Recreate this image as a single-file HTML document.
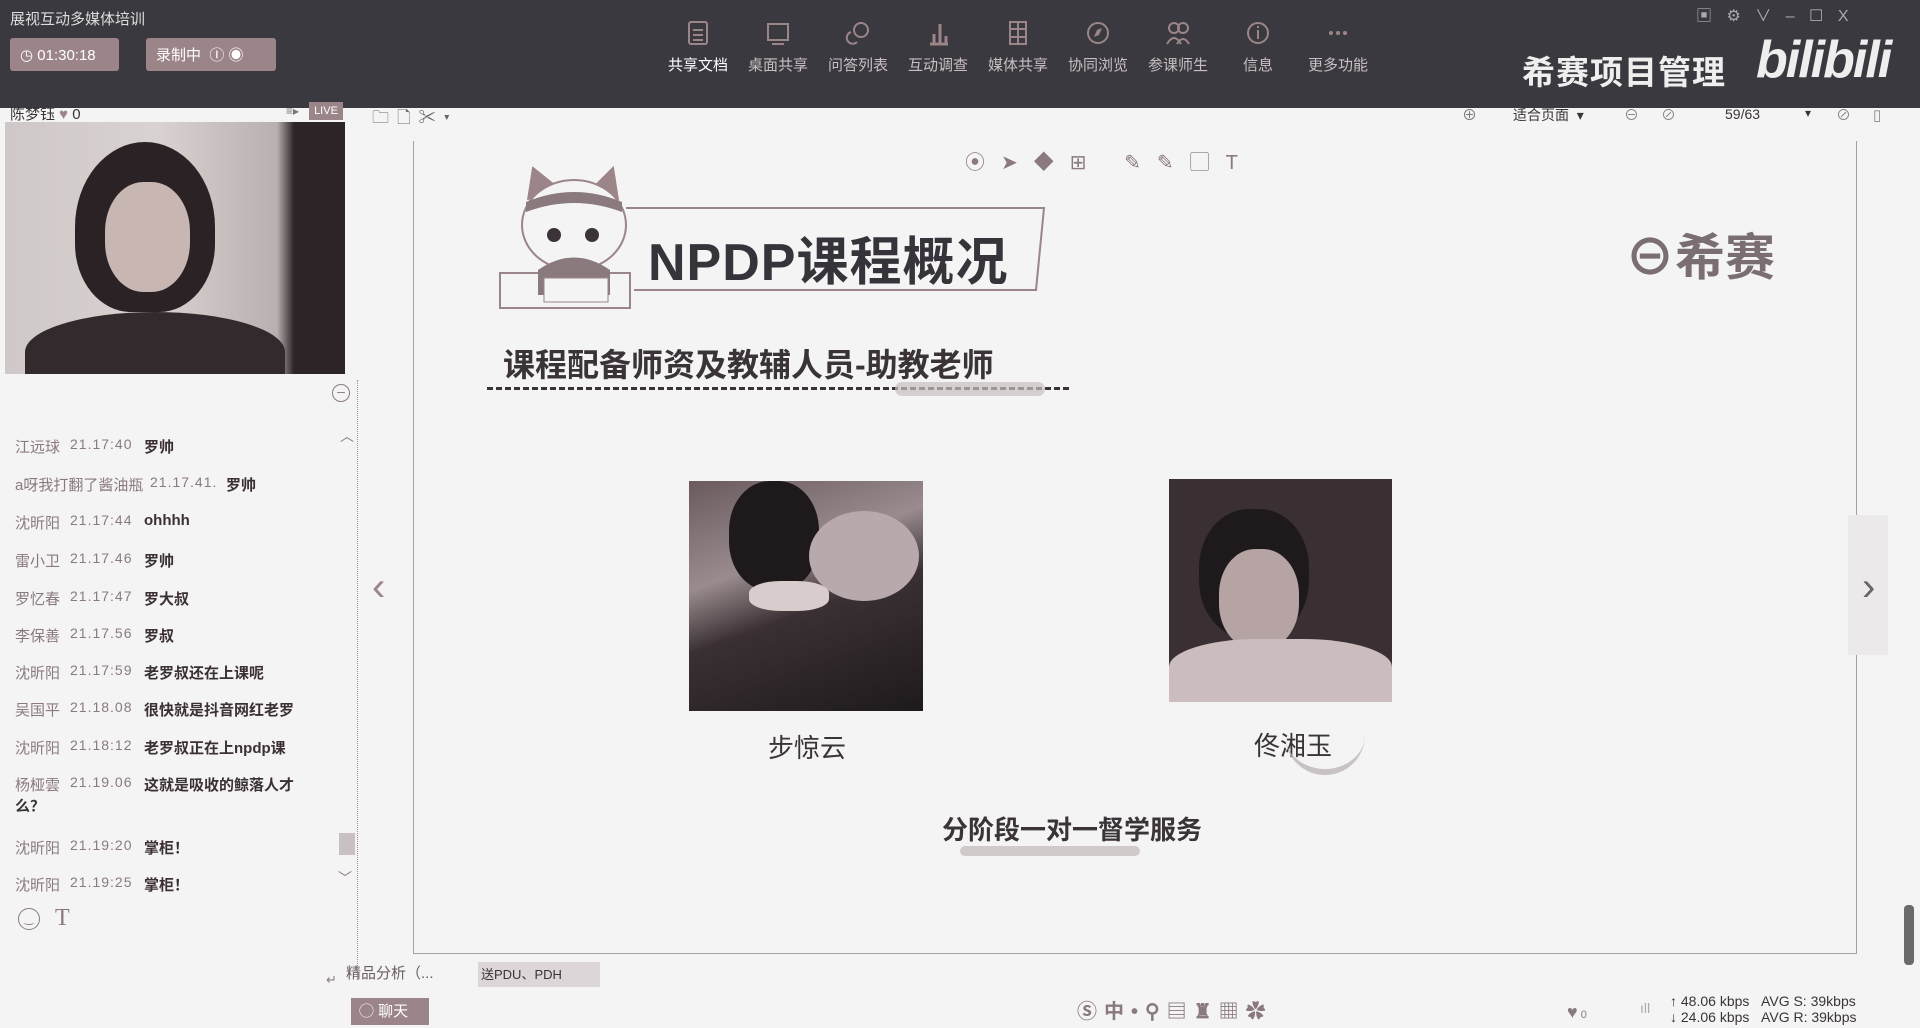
<!DOCTYPE html>
<html><head><meta charset="utf-8"><style>
*{margin:0;padding:0;box-sizing:border-box}
body{width:1920px;height:1028px;overflow:hidden;background:#f4f4f4;font-family:"Liberation Sans","Noto Sans CJK SC",sans-serif;position:relative;color:#3a3438}
.a{position:absolute}
.top{left:0;top:0;width:1920px;height:108px;background:#3b3940}
.btn{background:#9b8588;color:#fff;border-radius:3px;font-size:15px;display:flex;align-items:center;gap:8px;padding-left:10px}
.tb{color:#c9bfc2;font-size:15px;text-align:center;width:80px}
.tb svg{display:block;margin:0 auto 8px}
.chat{font-size:15px}
.chat .n{color:#8a7a7e;position:absolute;left:15px}
.chat .t{color:#8a7a7e;position:absolute;left:70px;font-size:14px;letter-spacing:1px}
.chat .m{position:absolute;left:144px;font-weight:bold;color:#3a3036}
</style></head><body>
<div class="a top"></div>
<div class="a" style="left:10px;top:8px;color:#ddd;font-size:15px">展视互动多媒体培训</div>
<div class="a btn" style="left:10px;top:38px;width:109px;height:33px">◷ 01:30:18</div>
<div class="a btn" style="left:146px;top:38px;width:130px;height:33px">录制中 &nbsp;Ⓘ ◉</div>
<div class="a" style="left:1696px;top:2px;color:#aaa;font-size:16px;white-space:nowrap;word-spacing:10px">▣ ⚙ ∨ – ☐ X</div>
<div class="a" style="left:658px;top:20px;display:flex">
<div class="tb" style="color:#fff"><svg width="22" height="26"><rect x="2" y="2" width="18" height="22" rx="2" fill="none" stroke="#9b8588" stroke-width="2"/><path d="M6 10h10M6 15h10M6 20h10" stroke="#9b8588" stroke-width="2"/></svg>共享文档</div>
<div class="tb"><svg width="24" height="26"><rect x="2" y="4" width="20" height="16" fill="none" stroke="#9b8588" stroke-width="2"/><path d="M6 24h12" stroke="#9b8588" stroke-width="2"/></svg>桌面共享</div>
<div class="tb"><svg width="26" height="26"><circle cx="16" cy="10" r="7" fill="none" stroke="#9b8588" stroke-width="2"/><path d="M6 12a6 6 0 1 0 6 10" fill="none" stroke="#9b8588" stroke-width="2"/></svg>问答列表</div>
<div class="tb"><svg width="24" height="26"><path d="M4 24h18M8 24V14M14 24V4M20 24V16" stroke="#9b8588" stroke-width="3"/></svg>互动调查</div>
<div class="tb"><svg width="24" height="26"><rect x="4" y="2" width="16" height="22" fill="none" stroke="#9b8588" stroke-width="2"/><path d="M4 9h16M4 17h16M12 2v22" stroke="#9b8588" stroke-width="2"/></svg>媒体共享</div>
<div class="tb"><svg width="24" height="26"><circle cx="12" cy="13" r="10" fill="none" stroke="#9b8588" stroke-width="2"/><path d="M8 17l3-7 5-2-3 7z" fill="#9b8588"/></svg>协同浏览</div>
<div class="tb"><svg width="26" height="26"><circle cx="9" cy="8" r="5" fill="none" stroke="#9b8588" stroke-width="2"/><circle cx="18" cy="8" r="5" fill="none" stroke="#9b8588" stroke-width="2"/><path d="M2 24q7-12 14 0M12 24q6-10 12 0" fill="none" stroke="#9b8588" stroke-width="2"/></svg>参课师生</div>
<div class="tb"><svg width="24" height="26"><circle cx="12" cy="13" r="10" fill="none" stroke="#9b8588" stroke-width="2"/><path d="M12 10v9M12 6v2" stroke="#9b8588" stroke-width="2"/></svg>信息</div>
<div class="tb"><svg width="24" height="26"><circle cx="5" cy="13" r="2" fill="#9b8588"/><circle cx="12" cy="13" r="2" fill="#9b8588"/><circle cx="19" cy="13" r="2" fill="#9b8588"/></svg>更多功能</div>
</div>
<div class="a" style="left:1522px;top:46px;color:#eee;font-size:33px;font-weight:bold;letter-spacing:1px">希赛项目管理</div>
<div class="a" style="left:1756px;top:30px;color:#eee;font-size:52px;font-weight:bold;font-style:italic;letter-spacing:-2px">bilibili</div>

<!-- left panel -->
<div class="a" style="left:10px;top:103px;font-size:15px">陈梦钰 <span style="color:#9b8588">♥</span> 0</div>
<div class="a" style="left:286px;top:104px;font-size:12px;color:#777">≡▸</div>
<div class="a" style="left:309px;top:102px;width:34px;height:18px;background:#9b8588;color:#fff;font-size:11px;text-align:center;line-height:18px">LIVE</div>
<div class="a" style="left:5px;top:122px;width:340px;height:252px;background:linear-gradient(90deg,#cfc8c8 0%,#d8d2d0 45%,#b9b0b0 80%,#2c2426 85%,#2c2426 100%);overflow:hidden">
<div class="a" style="left:70px;top:20px;width:140px;height:170px;border-radius:50% 50% 40% 40%;background:#2a2224"></div>
<div class="a" style="left:100px;top:60px;width:85px;height:110px;border-radius:45%;background:#c7b6b2"></div>
<div class="a" style="left:20px;top:190px;width:260px;height:80px;border-radius:50% 50% 0 0;background:#322a2c"></div>
</div>
<div class="a" style="left:332px;top:384px;width:18px;height:18px;border:1.5px solid #8a7a7e;border-radius:50%;font-size:14px;line-height:13px;text-align:center;color:#8a7a7e">–</div>
<div class="a" style="left:340px;top:426px;color:#8a7a7e;font-size:14px">︿</div>
<div class="a" style="left:338px;top:868px;color:#8a7a7e;font-size:14px">﹀</div>
<div class="a" style="left:339px;top:833px;width:16px;height:22px;background:#c8c0c2"></div>
<div class="a" style="left:357px;top:380px;width:1px;height:600px;border-left:1px dotted #a09497"></div>
<div class="a chat" style="left:0;top:0">
<div class="a" style="top:436px;left:0;width:330px"><span class="n">江远球</span><span class="t">21.17:40</span><span class="m">罗帅</span></div>
<div class="a" style="top:474px;left:0;width:330px"><span class="n" style="left:15px">a呀我打翻了酱油瓶</span><span class="t" style="left:150px">21.17.41.</span><span class="m" style="left:226px">罗帅</span></div>
<div class="a" style="top:512px;left:0;width:330px"><span class="n">沈昕阳</span><span class="t">21.17:44</span><span class="m">ohhhh</span></div>
<div class="a" style="top:550px;left:0;width:330px"><span class="n">雷小卫</span><span class="t">21.17.46</span><span class="m">罗帅</span></div>
<div class="a" style="top:588px;left:0;width:330px"><span class="n">罗忆春</span><span class="t">21.17:47</span><span class="m">罗大叔</span></div>
<div class="a" style="top:625px;left:0;width:330px"><span class="n">李保善</span><span class="t">21.17.56</span><span class="m">罗叔</span></div>
<div class="a" style="top:662px;left:0;width:330px"><span class="n">沈昕阳</span><span class="t">21.17:59</span><span class="m">老罗叔还在上课呢</span></div>
<div class="a" style="top:699px;left:0;width:330px"><span class="n">吴国平</span><span class="t">21.18.08</span><span class="m">很快就是抖音网红老罗</span></div>
<div class="a" style="top:737px;left:0;width:330px"><span class="n">沈昕阳</span><span class="t">21.18:12</span><span class="m">老罗叔正在上npdp课</span></div>
<div class="a" style="top:774px;left:0;width:330px"><span class="n">杨桠雲</span><span class="t">21.19.06</span><span class="m">这就是吸收的鲸落人才</span></div>
<div class="a" style="top:795px;left:15px;font-weight:bold">么？</div>
<div class="a" style="top:837px;left:0;width:330px"><span class="n">沈昕阳</span><span class="t">21.19:20</span><span class="m">掌柜！</span></div>
<div class="a" style="top:874px;left:0;width:330px"><span class="n">沈昕阳</span><span class="t">21.19:25</span><span class="m">掌柜！</span></div>
</div>
<div class="a" style="left:18px;top:908px;width:22px;height:22px;border:1.5px solid #8a7a7e;border-radius:50%;font-size:12px;text-align:center;color:#8a7a7e;line-height:18px">‿</div>
<div class="a" style="left:55px;top:905px;font-size:24px;color:#8a7a7e;font-family:'Liberation Serif',serif">T</div>
<div class="a" style="left:326px;top:972px;font-size:13px;color:#8a7a7e">↵</div>

<!-- doc toolbar -->
<div class="a" style="left:372px;top:103px;font-size:17px;color:#666;letter-spacing:8px">🗀🗋✂▾</div>
<div class="a" style="left:1462px;top:104px;font-size:15px;color:#777">⊕</div>
<div class="a" style="left:1513px;top:105px;font-size:14px">适合页面 &nbsp;▾</div>
<div class="a" style="left:1624px;top:104px;font-size:15px;color:#888;letter-spacing:22px">⊖⊘</div>
<div class="a" style="left:1725px;top:106px;font-size:14px">59/63</div>
<div class="a" style="left:1805px;top:106px;font-size:12px">▾</div>
<div class="a" style="left:1836px;top:104px;font-size:15px;color:#888;letter-spacing:22px">⊘▯</div>

<!-- slide -->
<div class="a" style="left:413px;top:141px;width:1444px;height:813px;border:1px solid #a89ea0;border-top:none"></div>
<div class="a" style="left:372px;top:565px;font-size:40px;color:#9b8588;font-weight:100">‹</div>
<div class="a" style="left:1848px;top:515px;width:40px;height:140px;background:#ece9ea"></div>
<div class="a" style="left:1862px;top:565px;font-size:40px;color:#666">›</div>
<div class="a" style="left:965px;top:146px;font-size:20px;color:#8a7a7e;letter-spacing:16px">⦿➤◆⊞ ✎✎▢T</div>

<!-- cat -->
<svg class="a" style="left:488px;top:160px" width="170" height="150">
<rect x="12" y="113" width="130" height="35" fill="none" stroke="#9b8588" stroke-width="2"/>
<path d="M40 40L45 8 70 28M105 28L125 8 130 40" fill="#9b8588" stroke="#9b8588" stroke-width="2"/>
<ellipse cx="86" cy="65" rx="52" ry="45" fill="#f4f4f4" stroke="#9b8588" stroke-width="2"/>
<path d="M38 42q48-20 96 0v10q-48-18-96 0z" fill="#8a7a7e"/>
<circle cx="66" cy="75" r="7" fill="#3a3438"/><circle cx="104" cy="75" r="7" fill="#3a3438"/>
<path d="M50 110q36-25 72 0v25H50z" fill="#8a7a7e"/>
<rect x="56" y="118" width="64" height="24" fill="#f4f4f4" stroke="#9b8588"/>
</svg>
<svg class="a" style="left:624px;top:206px" width="430" height="90"><path d="M2 2H420L412 84H10" fill="none" stroke="#9b8588" stroke-width="2"/></svg>
<div class="a" style="left:648px;top:220px;font-size:52px;font-weight:bold;color:#36333a;letter-spacing:1px">NPDP课程概况</div>
<div class="a" style="left:503px;top:340px;font-size:32px;font-weight:bold;color:#3a3438">课程配备师资及教辅人员-助教老师</div>
<div class="a" style="left:487px;top:387px;width:582px;border-top:3px dashed #3a3438"></div>
<div class="a" style="left:895px;top:382px;width:150px;height:14px;background:#c8bfc1;border-radius:7px;opacity:.7"></div>
<div class="a" style="left:1625px;top:218px;font-size:50px;color:#7a6e72;font-weight:bold">⊖希赛</div>

<div class="a" style="left:689px;top:481px;width:234px;height:230px;background:linear-gradient(160deg,#6a5a5e 0%,#9a8c8e 35%,#3a3034 55%,#1e1a1c 100%);overflow:hidden">
<div class="a" style="left:40px;top:0;width:90px;height:110px;border-radius:45%;background:#1e1a1c"></div>
<div class="a" style="left:120px;top:30px;width:110px;height:90px;border-radius:50%;background:#b8aaac"></div>
<div class="a" style="left:60px;top:100px;width:80px;height:30px;background:#d8cccc;border-radius:40%"></div>
</div>
<div class="a" style="left:1169px;top:479px;width:223px;height:223px;background:#3a3034;overflow:hidden">
<div class="a" style="left:30px;top:30px;width:110px;height:130px;border-radius:45%;background:#1e1a1c"></div>
<div class="a" style="left:50px;top:70px;width:80px;height:100px;border-radius:45%;background:#b6a4a4"></div>
<div class="a" style="left:0;top:160px;width:223px;height:70px;background:#cbbdbd;border-radius:40% 40% 0 0"></div>
</div>
<div class="a" style="left:768px;top:728px;font-size:26px">步惊云</div>
<div class="a" style="left:1254px;top:726px;font-size:26px">佟湘玉</div>
<div class="a" style="left:1285px;top:735px;width:80px;height:40px;border-bottom:6px solid #b8aeb0;border-radius:0 0 40px 40px;opacity:.7"></div>
<div class="a" style="left:942px;top:810px;font-size:26px;font-weight:bold;color:#3a3438">分阶段一对一督学服务</div>
<div class="a" style="left:960px;top:846px;width:180px;height:10px;background:#c8bfc1;border-radius:5px;opacity:.8"></div>

<!-- bottom -->
<div class="a" style="left:346px;top:962px;font-size:15px;color:#6a5e62">精品分析（...</div>
<div class="a" style="left:478px;top:962px;width:122px;height:25px;background:#ddd6d8;font-size:13px;line-height:25px;padding-left:3px">送PDU、PDH</div>
<div class="a" style="left:351px;top:998px;width:78px;height:27px;background:#9b8588;color:#fff;font-size:15px;line-height:27px;padding-left:8px">◯ 聊天</div>
<div class="a" style="left:1077px;top:995px;font-size:20px;color:#8a7a7e;letter-spacing:7px;font-weight:bold">Ⓢ中•⚲▤♜▦✿</div>
<div class="a" style="left:1567px;top:1002px;font-size:18px;color:#8a7a7e">♥<span style="font-size:11px"> 0</span></div>
<div class="a" style="left:1640px;top:1000px;font-size:14px;color:#aaa">ıll</div>
<div class="a" style="left:1670px;top:993px;font-size:14px;line-height:16px">↑ 48.06 kbps &nbsp;&nbsp;AVG S: 39kbps<br>↓ 24.06 kbps &nbsp;&nbsp;AVG R: 39kbps</div>
<div class="a" style="left:1904px;top:905px;width:10px;height:60px;background:#6a6a6a;border-radius:4px"></div>
</body></html>
